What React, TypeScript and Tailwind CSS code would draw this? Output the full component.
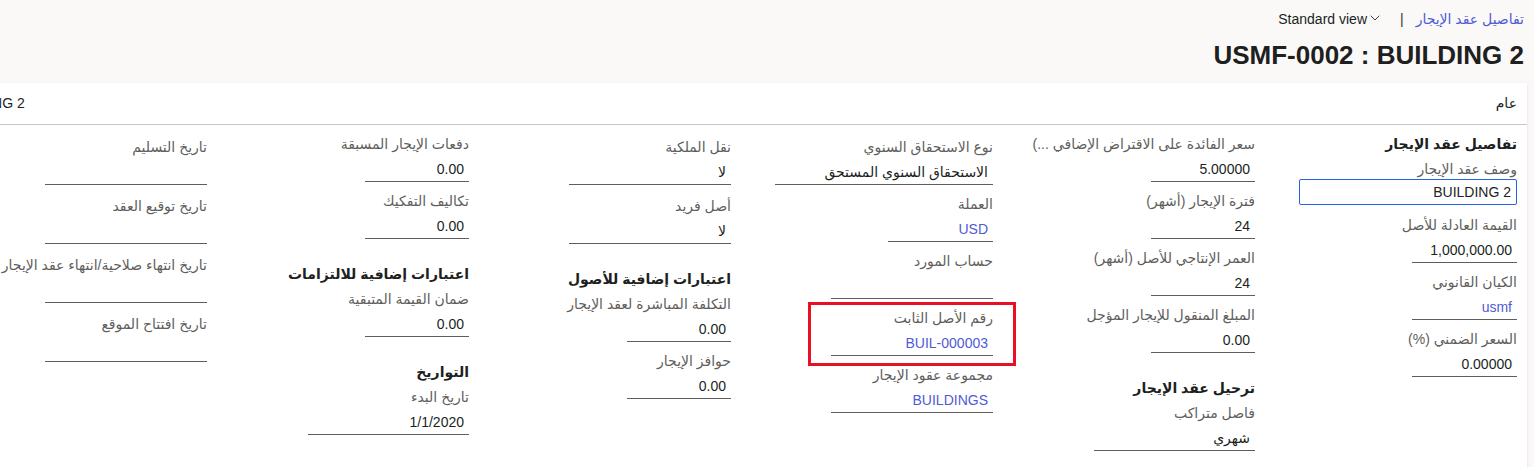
import type { ReactNode } from "react";
import { ChevronDown } from "lucide-react";

type FieldProps = {
  label: ReactNode;
  value?: string;
  w: string;
  link?: boolean;
  marked?: boolean;
  sp?: string;
};

function Field({ label, value = "", w, link, marked, sp = "mb-[9px]" }: FieldProps) {
  return (
    <div className={`relative ${sp}`}>
      {marked && (
        <span className="pointer-events-none absolute -top-[6px] -bottom-[10px] -left-[23px] -right-[23px] border-[3px] border-[#e81123]" />
      )}
      <div className="h-5 leading-5 whitespace-nowrap text-[#605e5c]">{label}</div>
      <div
        className={`${w} h-[28px] border-b border-[#605e5c] flex items-end pr-[5px] pb-[3px] leading-[17px] whitespace-nowrap ${
          link ? "text-[#4f5bd5]" : "text-[#201f1e]"
        }`}
      >
        {value}
      </div>
    </div>
  );
}

function BoxField({ label, value }: { label: string; value: string }) {
  return (
    <div className="mb-[10px]">
      <div className="h-5 leading-5 whitespace-nowrap text-[#605e5c]">{label}</div>
      <div className="w-[218px] h-[26px] border border-[#2266e3] rounded-[2px] flex items-center pr-[5px] text-[#201f1e]">
        {value}
      </div>
    </div>
  );
}

function GroupTitle({ children, first }: { children: ReactNode; first?: boolean }) {
  return (
    <div
      className={`h-5 leading-5 font-bold text-[#201f1e] whitespace-nowrap mb-[5px] ${first ? "" : "mt-[16px]"}`}
    >
      {children}
    </div>
  );
}

function Column({ children, className = "" }: { children: ReactNode; className?: string }) {
  return <div className={`w-[262px] shrink-0 flex flex-col items-start ${className}`}>{children}</div>;
}

export default function App() {
  return (
    <div
      dir="rtl"
      className="w-[1534px] h-[467px] overflow-hidden bg-[#faf9f8] text-[14px] text-[#201f1e] font-['Liberation_Sans','DejaVu_Sans',sans-serif]"
    >
      {/* top bar */}
      <div className="h-[38px] flex items-center pr-[10px]">
        <span className="text-[#4f5bd5]">تفاصيل عقد الإيجار</span>
        <span className="mr-[12px] ml-[17px] text-[#323130]">|</span>
        <span dir="ltr" className="flex items-center text-[#201f1e]">
          Standard view
          <ChevronDown size={16} strokeWidth={1.3} className="-mt-[3px]" />
        </span>
      </div>
      <h1 className="h-[34px] leading-[34px] pr-[10px] text-[26px] font-bold text-[#201f1e]">
        USMF-0002 : BUILDING 2
      </h1>

      {/* fast tab */}
      <div className="mt-[11px] mr-[7px] h-[384px] bg-white rounded-tr-[2px] shadow-[0_1px_3px_rgba(0,0,0,0.12)] overflow-hidden">
        <div className="h-[42px] flex items-center justify-between pr-[10px] border-b border-[#c8c6c4]">
          <span className="text-[#201f1e]">عام</span>
          <span dir="ltr" className="-ml-[53px] text-[#201f1e]">
            BUILDING 2
          </span>
        </div>

        <div className="flex pt-[9px] pr-[10px]">
          <Column>
            <GroupTitle first>تفاصيل عقد الإيجار</GroupTitle>
            <BoxField label="وصف عقد الإيجار" value="BUILDING 2" />
            <Field label="القيمة العادلة للأصل" value="1,000,000.00" w="w-[105px]" />
            <Field label="الكيان القانوني" value="usmf" w="w-[105px]" link />
            <Field label="السعر الضمني (%)" value="0.00000" w="w-[105px]" />
          </Column>

          <Column>
            <Field
              label={
                <span>
                  سعر الفائدة على الاقتراض الإضافي <bdi dir="ltr">(...</bdi>
                </span>
              }
              value="5.00000"
              w="w-[104px]"
            />
            <Field label="فترة الإيجار (أشهر)" value="24" w="w-[104px]" />
            <Field label="العمر الإنتاجي للأصل (أشهر)" value="24" w="w-[104px]" />
            <Field label="المبلغ المنقول للإيجار المؤجل" value="0.00" w="w-[104px]" />
            <GroupTitle>ترحيل عقد الإيجار</GroupTitle>
            <Field label="فاصل متراكب" value="شهري" w="w-[161px]" />
          </Column>

          <Column className="pt-[3px]">
            <Field label="نوع الاستحقاق السنوي" value="الاستحقاق السنوي المستحق" w="w-[218px]" />
            <Field label="العملة" value="USD" w="w-[105px]" link />
            <Field label="حساب المورد" w="w-[162px]" />
            <Field label="رقم الأصل الثابت" value="BUIL-000003" w="w-[162px]" link marked />
            <Field label="مجموعة عقود الإيجار" value="BUILDINGS" w="w-[162px]" link />
          </Column>

          <Column className="pt-[3px]">
            <Field label="نقل الملكية" value="لا" w="w-[162px]" sp="mb-[11px]" />
            <Field label="أصل فريد" value="لا" w="w-[162px]" />
            <GroupTitle>اعتبارات إضافية للأصول</GroupTitle>
            <Field label="التكلفة المباشرة لعقد الإيجار" value="0.00" w="w-[104px]" />
            <Field label="حوافز الإيجار" value="0.00" w="w-[104px]" />
          </Column>

          <Column>
            <Field label="دفعات الإيجار المسبقة" value="0.00" w="w-[104px]" />
            <Field label="تكاليف التفكيك" value="0.00" w="w-[104px]" />
            <GroupTitle>اعتبارات إضافية للالتزامات</GroupTitle>
            <Field label="ضمان القيمة المتبقية" value="0.00" w="w-[104px]" />
            <GroupTitle>التواريخ</GroupTitle>
            <Field label="تاريخ البدء" value="1/1/2020" w="w-[161px]" />
          </Column>

          <Column className="pt-[3px]">
            <Field label="تاريخ التسليم" w="w-[162px]" sp="mb-[11px]" />
            <Field label="تاريخ توقيع العقد" w="w-[162px]" sp="mb-[11px]" />
            <Field label="تاريخ انتهاء صلاحية/انتهاء عقد الإيجار" w="w-[162px]" sp="mb-[11px]" />
            <Field label="تاريخ افتتاح الموقع" w="w-[162px]" />
          </Column>
        </div>
      </div>
    </div>
  );
}
